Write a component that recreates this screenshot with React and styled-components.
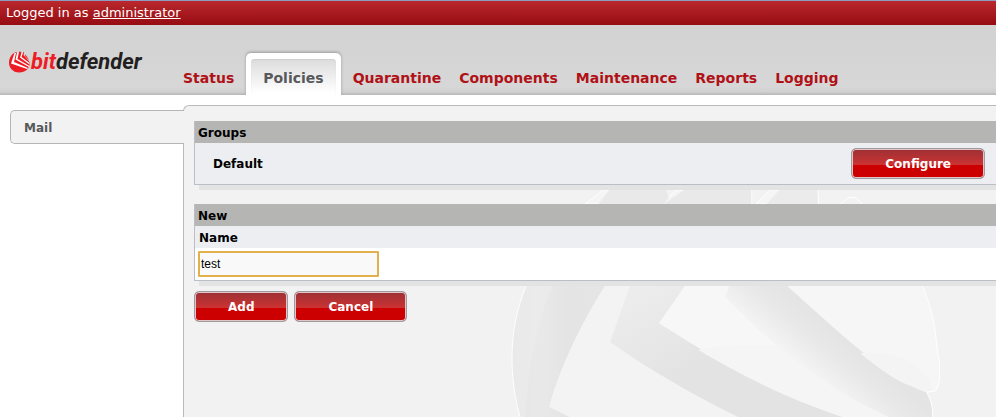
import React, { useState } from 'react';
import styled, { createGlobalStyle, css } from 'styled-components';

const GlobalStyle = createGlobalStyle`
  * {
    box-sizing: border-box;
  }

  body {
    margin: 0;
    background: #fff;
    font-family: 'DejaVu Sans', Verdana, sans-serif;
    font-size: 12px;
    line-height: 16px;
    color: #000;
  }
`;

const Page = styled.div`
  display: flex;
  flex-direction: column;
  min-height: 100vh;
`;

const TopBar = styled.div`
  height: 25px;
  padding: 4px 6px;
  border-top: 1px solid #8f9dc4;
  background: linear-gradient(#b9282d, #960c12);
  font-size: 13px;
  color: #fff;

  a {
    color: #fff;
  }
`;

const Header = styled.header`
  display: flex;
  align-items: flex-end;
  height: 70px;
  padding-left: 8px;
  background: linear-gradient(#d2d2d2, #d6d7d6 62px, #cfd0cf 67px, #b4b5b4 70px);
`;

const Logo = styled.a`
  display: flex;
  align-items: center;
  width: 166px;
  height: 28px;
  margin-bottom: 19px;
  font: italic bold 22px/28px Roboto, Arial, sans-serif;
  color: #231f20;
  text-decoration: none;

  span {
    color: #ed1c24;
  }
`;

const Nav = styled.nav`
  display: flex;
  align-items: flex-end;
`;

const activeTab = css`
  margin: 0 3px;
  padding: 6px 5px 0;
  border-radius: 5px 5px 0 0;
  background: #fff;
  box-shadow: 0 -1px 3px #999;
  clip-path: inset(-5px -5px 0 -5px);
  color: #58595b;

  span {
    padding: 0 12px;
    background: linear-gradient(#dcdcdc, #fff 34px);
    box-shadow: inset 0 1px 1px #d0d0d0;
  }
`;

const NavLink = styled.a`
  padding: 6px 9px 0;
  font-size: 14px;
  font-weight: bold;
  color: #b01116;
  text-decoration: none;

  span {
    display: block;
    height: 36px;
    border-radius: 4px 4px 0 0;
    line-height: 39px;
  }

  ${({ $active }) => $active && activeTab}
`;

const Main = styled.main`
  display: flex;
  flex: 1;
  padding-top: 10px;
`;

const Sidebar = styled.aside`
  z-index: 1;
  width: 184px;
  margin-right: -1px;
  padding: 5px 0 0 10px;
`;

const SideLink = styled.a`
  display: block;
  height: 34px;
  padding: 0 13px;
  border: 1px solid #b4b5b9;
  border-right: 0;
  border-radius: 5px 0 0 5px;
  background: #f2f2f2;
  font-weight: bold;
  line-height: 34px;
  color: #58595b;
  text-decoration: none;
`;

const Content = styled.div`
  position: relative;
  flex: 1;
  min-width: 0;
  overflow: hidden;
  padding: 15px 0 0 10px;
  border-top: 1px solid #b9babd;
  border-left: 1px solid #b9babd;
  border-radius: 6px 0 0 0;
  background: #f2f2f2;
`;

const Watermark = styled.svg`
  position: absolute;
  top: 74px;
  right: 0;
  width: 506px;
  height: 237px;
`;

const Inner = styled.div`
  position: relative;
`;

const card = css`
  border-left: 1px solid #bcbec6;
  border-bottom: 1px solid #bcbec6;
  box-shadow: 5px 5px 0 #e2e4e3;
`;

const GroupTable = styled.table`
  ${card}
  width: 100%;
  margin-bottom: 19px;
  border-spacing: 0;
  background: #edeef1;

  th {
    height: 22px;
    padding: 2px 3px 0;
    background: #b5b5b3;
    text-align: left;
  }

  td {
    height: 41px;
    padding: 0 11px 0 18px;
    font-weight: bold;
  }

  td:last-child {
    text-align: right;
  }
`;

const FormBox = styled.div`
  ${card}
  margin-bottom: 10px;
  background: #fff;
  font-weight: bold;
  line-height: 24px;
`;

const FormTitle = styled.h2`
  height: 22px;
  margin: 0;
  padding: 0 3px;
  background: #b5b5b3;
  font-size: 12px;
`;

const FieldLabel = styled.label`
  display: block;
  height: 22px;
  padding: 0 4px;
  background: #edeef1;
`;

const Field = styled.div`
  display: flex;
  padding: 3px;
`;

const TextInput = styled.input`
  width: 181px;
  height: 26px;
  padding: 0 1px;
  border: 2px solid #e2b14e;
  border-radius: 1px;
  outline: 0;
  background: #f9f9f9;
  font: 12px 'Liberation Sans', Arial, sans-serif;
`;

const Actions = styled.div`
  display: flex;
  gap: 6px;
`;

const Button = styled.button`
  height: 31px;
  padding: 0 33px;
  border: 1px solid #9b9ba0;
  border-radius: 5px;
  background: linear-gradient(#9c3034, #cc3333 54%, #cc0000 54%);
  box-shadow: inset 0 0 0 1px #e3c5c6;
  font: bold 12px 'DejaVu Sans', Verdana, sans-serif;
  color: #fff;
`;

const LogoMark = () => (
  <svg width="23" height="22" viewBox="0 0 23 22" aria-hidden="true">
    <path
      fill="#ed1c24"
      d="M6 2L8.500 1L9 3L11.500 0.500L13 1L14 3.500L15.500 1L17.500 2L21 8Q23 14 20 17.500C17 21.500 9 23 5 19.500C-1 15 0 6 6 2Z"
    />
    <path fill="#fff" d="M6.500 2L3 12.500L19 18L20 17L6 11L8 2Z" />
    <path fill="#fff" d="M9 2L7.500 8.500L21 16L21.500 15L9.500 8L11 1Z" />
    <path fill="#fff" d="M13.500 2L12 6.500L21.500 13.500L21.500 12L13.500 6L15 1.500Z" />
    <path fill="#d4d4d4" d="M16.500 0L15.500 4L22 11.500V5Z" />
    <path fill="#ed1c24" d="M17 3.500L17 5L21 9.500Q20 6 17 3.500Z" />
  </svg>
);

const Orb = () => (
  <Watermark viewBox="0 0 1518 711" aria-hidden="true">
    <defs>
      <linearGradient id="rim">
        <stop offset="0" stopColor="#e5e5e5" />
        <stop offset="0.3" stopColor="#e9e9e9" />
        <stop offset="0.6" stopColor="#e4e4e4" />
        <stop offset="1" stopColor="#e5e5e5" />
      </linearGradient>
      <linearGradient id="fold" x1="0" y1="0.2" x2="0.4" y2="0.6">
        <stop offset="0" stopColor="#ececec" />
        <stop offset="1" stopColor="#e3e3e3" />
      </linearGradient>
      <linearGradient id="fade" gradientUnits="userSpaceOnUse" x1="900" y1="540" x2="1000" y2="420">
        <stop offset="0" stopColor="#f5f5f5" />
        <stop offset="0.6" stopColor="#e8e8e8" />
        <stop offset="1" stopColor="#e4e4e4" />
      </linearGradient>
    </defs>
    <g stroke="#fff" strokeWidth="3">
      <path fill="#f5f5f5" d="M285 72L340 30H530L537 52L558 30H785V72Z" />
      <path fill="#f5f5f5" d="M797 72L840 30H983L986 72Z" />
      <path fill="none" d="M1052 72L1075 53H1095L1117 72" />
    </g>
    <path fill="#e9e9e9" d="M325 72L358 30H530L537 52L522 72Z" />
    <path fill="#e9e9e9" d="M522 72L582 30H784V72Z" />
    <path fill="#ebebeb" d="M830 72L868 30H982L984 72Z" />
    <path
      fill="url(#rim)"
      d="M108 318C50 460 60 600 90 711H240L178 680C210 560 280 420 345 318Z"
    />
    <path fill="#eee" opacity="0.5" d="M108 318C50 460 60 600 90 711H108C108 600 140 430 188 318Z" />
    <path
      fill="#f3f3f3"
      d="M345 318C280 420 210 560 178 680L240 711H745C600 640 480 570 360 486L420 318Z"
    />
    <path
      fill="url(#fold)"
      d="M420 318L360 486C480 570 600 640 745 711H1060C850 640 700 550 507 430L585 318Z"
    />
    <path
      fill="#f7f7f7"
      d="M585 318L507 430C700 550 850 640 1060 711H1195C1000 620 850 500 706 350L718 318Z"
    />
    <path fill="#f5f5f5" d="M625 510C700 495 780 495 860 495L1195 711H1060C900 660 760 590 625 510Z" />
    <path
      fill="url(#fade)"
      d="M718 318L706 350C850 500 1000 620 1195 711H1328Q1330 670 1310 637C1200 600 1050 460 892 318Z"
    />
    <path
      fill="#f6f6f6"
      d="M892 318C1050 460 1200 600 1310 637Q1350 640 1348 600V530C1335 420 1325 390 1298 318Z"
    />
    <path fill="#f4f4f4" d="M1110 520C1220 510 1310 550 1328 634C1240 625 1180 575 1110 520Z" />
    <g fill="none" stroke="#fff" strokeWidth="3">
      <path d="M108 318C50 460 60 600 90 711" />
      <path d="M1298 318C1325 390 1335 420 1342 520L1348 540V605L1338 632L1310 637Q1330 670 1328 711" />
    </g>
  </Watermark>
);

const navItems = [
  'Status',
  'Policies',
  'Quarantine',
  'Components',
  'Maintenance',
  'Reports',
  'Logging',
];

const App = () => {
  const [name, setName] = useState('test');

  return (
    <Page>
      <GlobalStyle />
      <TopBar>
        Logged in as <a href="#administrator">administrator</a>
      </TopBar>
      <Header>
        <Logo href="#home">
          <LogoMark />
          <span>bit</span>defender
        </Logo>
        <Nav>
          {navItems.map((item) => (
            <NavLink key={item} href={`#${item.toLowerCase()}`} $active={item === 'Policies'}>
              <span>{item}</span>
            </NavLink>
          ))}
        </Nav>
      </Header>
      <Main>
        <Sidebar>
          <SideLink href="#mail">Mail</SideLink>
        </Sidebar>
        <Content>
          <Orb />
          <Inner>
            <GroupTable>
              <thead>
                <tr>
                  <th colSpan={2}>Groups</th>
                </tr>
              </thead>
              <tbody>
                <tr>
                  <td>Default</td>
                  <td>
                    <Button type="button">Configure</Button>
                  </td>
                </tr>
              </tbody>
            </GroupTable>
            <form onSubmit={(e) => e.preventDefault()}>
              <FormBox>
                <FormTitle>New</FormTitle>
                <FieldLabel htmlFor="group-name">Name</FieldLabel>
                <Field>
                  <TextInput
                    id="group-name"
                    type="text"
                    value={name}
                    onChange={(e) => setName(e.target.value)}
                  />
                </Field>
              </FormBox>
              <Actions>
                <Button type="submit">Add</Button>
                <Button type="button">Cancel</Button>
              </Actions>
            </form>
          </Inner>
        </Content>
      </Main>
    </Page>
  );
};

export default App;
